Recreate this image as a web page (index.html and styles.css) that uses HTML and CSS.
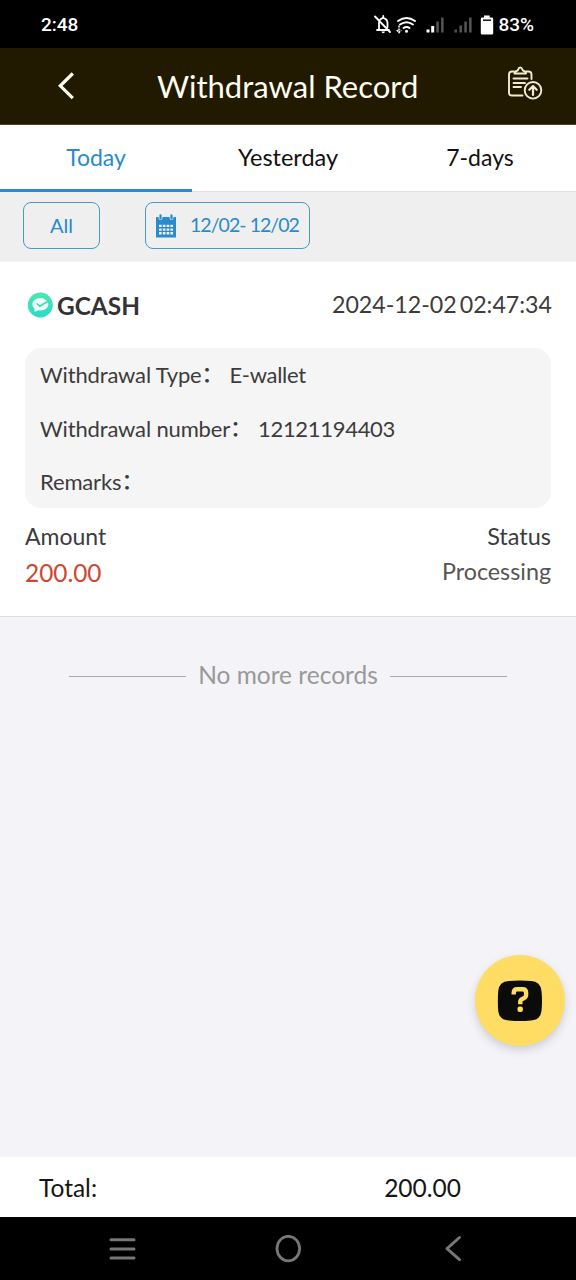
FILE: index.html
```html
<!DOCTYPE html>
<html lang="en">
<head>
<meta charset="utf-8">
<title>Withdrawal Record</title>
<link rel="stylesheet" href="styles.css">
</head>
<body>
<div class="screen">
  <div class="statusbar">
    <span class="clock">2:48</span>
    <svg class="status-icons" width="126" height="24" viewBox="0 0 126 24" fill="none">
      <g stroke="#fff" stroke-width="1.8" stroke-linecap="round" stroke-linejoin="round">
        <path d="M5 17H17M7 16.500V10q0-4 4-5.200q4.300 1 4.500 5.200v4M11.300 3v2M3 3.500l15 15.500"/>
      </g>
      <path d="M9.500 18.600h3.500q-.3 1.700-1.800 1.700t-1.700-1.700z" fill="#fff"/>
      <g stroke="#fff" stroke-width="2" stroke-linecap="round">
        <path d="M26 8q8.500-6.200 17 0M28 11.500q6.500-4.600 13 0M31.500 15q3-2.200 6 0"/>
      </g>
      <circle cx="34.500" cy="18.300" r="1.500" fill="#fff"/>
      <path d="M27 12.500v7M24.800 17l2.200 2.500 2.200-2.500" stroke="#fff" stroke-width="1.500" stroke-dasharray="2 1"/>
      <path d="M54.500 16.500h3V19.500h-3zM59.200 13h3v6.500h-3z" fill="#fff"/>
      <path d="M64.300 8.500h2.500v11h-2.500zM69.100 4.500h2.500v15h-2.500zM82.500 16.500h2.500v3h-2.500zM87.400 12.500h2.500v7h-2.500zM92.300 8.500h2.500v11h-2.500zM97.100 4.500h2.500v15h-2.500z" fill="#555"/>
      <path d="M112 2.500h5.600v2h2.200q1.400 0 1.400 1.400v14.300q0 1.400-1.400 1.400h-9.600q-1.400 0-1.400-1.400V5.900q0-1.400 1.400-1.400h1.800z" fill="#fff"/>
      <path d="M111 7.200h8" stroke="#111" stroke-width="1.500"/>
    </svg>
    <span class="battery">83%</span>
  </div>
  <header class="header">
    <svg class="back" width="18" height="30" viewBox="0 0 18 30"><path d="M15.800 2.500L3.300 14.800l12.500 12.300" fill="none" stroke="#fffdf0" stroke-width="3.200"/></svg>
    <h1 class="title">Withdrawal Record</h1>
    <svg class="record-icon" width="36" height="36" viewBox="0 0 36 36" fill="none" stroke="#f4ead0" stroke-width="1.900" stroke-linecap="round" stroke-linejoin="round">
      <path d="M7 5.500H5Q2 5.500 2 8.500v18.500Q2 29.500 5 29.500h10.500M19.500 5.500h2Q24.500 5.500 24.500 8.500V13"/>
      <path d="M7.500 7.500q0-2 2-2.500q1.500-.3 1.700-1.500q.5-2 2-2t2.200 2q.3 1.200 1.600 1.500q2 .5 2 2.500z"/>
      <path d="M6.500 12.500h14M6.500 17h11.500M6.500 21h7.500"/>
      <circle cx="26" cy="24.300" r="8.300"/>
      <path d="M26 29v-8.500M22.300 23.800l3.700-3.700 3.700 3.700" stroke-width="2.200"/>
    </svg>
  </header>
  <nav class="tabs">
    <div class="tab tab-active"><span>Today</span></div>
    <div class="tab tab-wide"><span>Yesterday</span></div>
    <div class="tab"><span>7-days</span></div>
  </nav>
  <div class="filters">
    <div class="filter filter-all">All</div>
    <div class="filter filter-date">
      <svg width="22" height="24" viewBox="0 0 22 24">
        <path d="M1 3h2.500q0 3 2 3t2-3h7q0 3 2 3t2-3H21v6H1z" fill="#288bcb"/>
        <path d="M5.500 1.300v3.200M16.500 1.300v3.200" stroke="#288bcb" stroke-width="2.200" stroke-linecap="round"/>
        <path d="M1 8h20v15.500H1zM4 10.700v2.300h2.700v-2.300zm3.800 0v2.300h2.700v-2.300zm3.800 0v2.300h2.700v-2.300zm3.800 0v2.300h2.700v-2.300zM4 14.400v2.300h2.700v-2.300zm3.800 0v2.300h2.700v-2.300zm3.800 0v2.300h2.700v-2.300zm3.800 0v2.300h2.700v-2.300zM4 18.100v2.300h2.700v-2.300zm3.800 0v2.300h2.700v-2.300zm3.800 0v2.300h2.700v-2.300zm3.800 0v2.300h2.700v-2.300z" fill="#288bcb" fill-rule="evenodd"/>
      </svg>
      <span class="range">12/02- 12/02</span>
    </div>
  </div>
  <section class="record">
    <div class="record-head">
      <svg class="logo" width="26" height="26" viewBox="0 0 26 26">
        <defs><linearGradient id="mint" x1="0" y1="0" x2="0" y2="1"><stop offset="0" stop-color="#4be8af"/><stop offset="1" stop-color="#2bdac8"/></linearGradient></defs>
        <circle cx="13.300" cy="13" r="12.500" fill="url(#mint)"/>
        <ellipse cx="13.300" cy="12.300" rx="8" ry="6.200" fill="#effff9"/>
        <path d="M7.500 15.500v4.500l5-2.500z" fill="#effff9"/>
        <path d="M9.800 11.500l3 2.700L20.500 9.500" fill="none" stroke="#40d9b0" stroke-width="1.500"/>
      </svg>
      <span class="method">GCASH</span>
      <span class="time">2024-12-02 02:47:34</span>
    </div>
    <div class="details">
      <div class="row"><span class="label">Withdrawal Type<i class="colon">：</i></span><span class="value">E-wallet</span></div>
      <div class="row"><span class="label">Withdrawal number<i class="colon">：</i></span><span class="value">12121194403</span></div>
      <div class="row"><span class="label">Remarks<i class="colon">：</i></span></div>
    </div>
    <div class="summary"><span>Amount</span><span class="status-label">Status</span></div>
    <div class="summary values"><span class="amount">200.00</span><span class="status">Processing</span></div>
  </section>
  <main class="rest">
    <div class="end"><span class="rule"></span><span class="end-text">No more records</span><span class="rule"></span></div>
    <div class="help">
      <svg width="46" height="42" viewBox="0 0 46 42">
        <path d="M12 1Q23 0 34 1Q43.500 1.500 44.500 11Q45.500 21 44.500 31Q43.500 40 34 40.500Q23 41.500 12 40.500Q2 40 1.200 31Q.5 21 1.200 11Q2 1.500 12 1z" fill="#0b0c0a"/>
        <path d="M16.700 14.500v-1.700q0-3.600 3.600-3.600h5.200q3.600 0 3.600 3.600v2q0 2.500-2.300 3.500l-1.500.7q-2 .8-2 2.800v2.500" fill="none" stroke="#ffdc64" stroke-width="4.400"/>
        <rect x="20.500" y="26.500" width="5.400" height="5.400" rx="2" fill="#ffdc64"/>
      </svg>
    </div>
  </main>
  <footer class="total"><span>Total:</span><span>200.00</span></footer>
  <div class="navbar">
    <svg width="28" height="28" viewBox="0 0 28 28"><path d="M3 4.800h23M3 13.900h23M3 23h23" stroke="#777" stroke-width="3" stroke-linecap="round"/></svg>
    <svg width="28" height="28" viewBox="0 0 28 28"><ellipse cx="14.300" cy="13.600" rx="11.300" ry="12.300" fill="none" stroke="#777" stroke-width="2.800"/></svg>
    <svg width="28" height="28" viewBox="0 0 28 28"><path d="M19.500 2.500L7 13.700l12.500 11" fill="none" stroke="#777" stroke-width="2.900" stroke-linecap="round" stroke-linejoin="round"/></svg>
  </div>
</div>
</body>
</html>
```
FILE: styles.css
```css
* { box-sizing: border-box; }
body { margin: 0; font-family: Lato, "Noto Sans CJK SC", sans-serif; color: #3c3c3c; }
svg { display: block; flex: none; }
span { white-space: nowrap; }
.screen { width: 576px; height: 1280px; display: flex; flex-direction: column; background: #f3f3f8; }
.statusbar { height: 48px; flex: none; background: #000; color: #fff; display: flex; align-items: center; padding: 2px 42px 0 41px; font: 500 19px/24px Roboto, sans-serif; }
.status-icons { margin-left: auto; }
.header { height: 77px; flex: none; background: #221a00; border-bottom: 1px solid #4b452f; display: flex; align-items: center; padding: 0 33px 0 57px; }
.title { margin: 0 auto 0 82px; font-size: 31px; font-weight: 400; line-height: 40px; color: #fffdf0; white-space: nowrap; }
.record-icon { margin-bottom: 4px; }
.tabs { height: 67px; flex: none; display: grid; grid-template-columns: repeat(3, 1fr); background: #fff; border-bottom: 1px solid #dedfe1; }
.tab { height: 67px; text-align: center; font-size: 23px; line-height: 65px; color: #111; }
.tab-wide { font-size: 23.500px; }
.tab-active { color: #288bcb; border-bottom: 3px solid #288bcb; }
.filters { height: 70px; flex: none; background: #efefef; border-bottom: 1px solid #f3f3f3; display: flex; gap: 45px; padding: 10px 23px; color: #288bcb; font-size: 20px; }
.filter { height: 47px; border: 1px solid #4799cb; border-radius: 8px; display: flex; align-items: center; }
.filter-all { width: 77px; justify-content: center; padding-bottom: 1px; }
.filter-date { width: 165px; padding-left: 9px; gap: 13px; }
.range { font-size: 19.500px; letter-spacing: -0.95px; padding-bottom: 2px; }
.record { height: 355px; flex: none; background: #fff; border-bottom: 1px solid #dddde0; padding: 0 25px; }
.record-head { height: 86px; display: flex; align-items: center; padding-left: 2px; }
.method { margin-left: 4px; font-size: 24.400px; font-weight: 700; color: #333; }
.time { margin-left: auto; margin-right: -1px; font-size: 23.200px; word-spacing: -3px; padding-bottom: 2px; }
.details { height: 160px; background: #f5f5f5; border-radius: 16px; padding-left: 15px; font-size: 22px; letter-spacing: -0.150px; }
.row { height: 53.500px; display: flex; align-items: center; }
.row .label, .row .value { line-height: 53px; }
.colon { font-family: "Noto Sans CJK SC", sans-serif; font-style: normal; font-weight: 500; line-height: 1; vertical-align: 1px; }
.label { margin-right: 6px; }
.value { letter-spacing: -0.300px; }
.summary { height: 36px; display: flex; justify-content: space-between; align-items: center; font-size: 23px; margin-top: 10px; }
.status-label { font-size: 23.500px; }
.values { margin-top: 0; height: 36px; }
.amount { color: #cf4633; font-size: 24.400px; }
.status { color: #555; font-size: 23.300px; padding-bottom: 3px; }
.rest { flex: 1; position: relative; padding-top: 38px; }
.end { display: flex; align-items: center; justify-content: center; gap: 12px; color: #999; font-size: 24.500px; line-height: 40px; }
.rule { width: 117px; height: 1px; background: #a9a9ad; margin-top: 2px; }
.help { position: absolute; right: 11px; top: 338px; width: 90px; height: 91px; border-radius: 50%; background: #ffdc64; box-shadow: 0 4px 9px rgba(80, 80, 100, .23); display: flex; align-items: center; justify-content: center; }
.total { height: 60px; flex: none; background: #fff; color: #151515; display: flex; align-items: center; justify-content: space-between; padding: 0 115px 0 39px; font-size: 24.500px; }
.navbar { height: 63px; flex: none; background: #000; display: flex; justify-content: space-between; padding: 18px 108px 0; }
```
